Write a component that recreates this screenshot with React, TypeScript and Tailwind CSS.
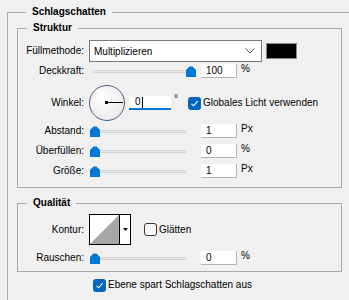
import React from 'react';

const font = { fontFamily: '"Liberation Sans", Arial, sans-serif' };

function Thumb() {
    return (
        <svg width="10" height="11" viewBox="0 0 10 11" className="block">
            <path d="M0 11 V4 L3.5 0.5 H6.5 L10 4 V11 Z" fill="#0078d7" />
        </svg>
    );
}

function Slider({ atEnd = false }: { atEnd?: boolean }) {
    return (
        <div className="relative h-[11px] w-[106px]">
            <div className="absolute left-[3px] right-[10px] top-[4px] h-[3px] border border-[#d6d6d6] bg-[#e7e7e7]" />
            <div className={`absolute top-0 ${atEnd ? 'left-[96px]' : 'left-0'}`}>
                <Thumb />
            </div>
        </div>
    );
}

function NumBox({ value }: { value: string }) {
    return (
        <div className="flex h-[14px] w-[36px] items-center border-b border-r border-[#b4b4b4] bg-white pl-[5px] text-[10px] leading-none text-black">
            {value}
        </div>
    );
}

function Check({ checked = true }: { checked?: boolean }) {
    if (!checked) {
        return <div className="h-[13px] w-[13px] rounded-[3px] border border-[#333] bg-[#fafafa]" />;
    }
    return (
        <div className="flex h-[13px] w-[13px] items-center justify-center rounded-[3px] bg-[#0067c0]">
            <svg width="9" height="9" viewBox="0 0 9 9">
                <path d="M1.5 4.8 L3.6 6.8 L7.6 2.2" fill="none" stroke="white" strokeWidth="1.1" />
            </svg>
        </div>
    );
}

function Label({ children }: { children: React.ReactNode }) {
    return <div className="w-[67px] shrink-0 pr-[1px] text-right text-[10px] leading-none text-black">{children}</div>;
}

function SliderRow({ label, value, unit, atEnd = false, className = '' }: { label: string; value: string; unit: string; atEnd?: boolean; className?: string }) {
    return (
        <div className={`flex h-[16px] items-center ${className}`}>
            <Label>{label}</Label>
            <div className="ml-[5px]">
                <Slider atEnd={atEnd} />
            </div>
            <div className="ml-[5px]">
                <NumBox value={value} />
            </div>
            <div className="ml-[4px] -mt-[5px] text-[10px] leading-none text-black">{unit}</div>
        </div>
    );
}

export default function App() {
    return (
        <div className="h-[300px] w-[349px] overflow-hidden bg-[#f0f0f0] text-black" style={font}>
            <fieldset className="ml-[7px] mt-[4px] w-[360px] border-l border-t border-[#a9a9a9] p-0 pl-[9px]">
                <legend className="ml-[9px] px-[6px] text-[10px] font-bold leading-[16px]">Schlagschatten</legend>

                <fieldset className="w-[325px] border border-[#a9a9a9] p-0">
                    <legend className="ml-[9px] px-[6px] text-[10px] font-bold leading-[16px]">Struktur</legend>
                    <div className="flex flex-col pb-[8px] pt-[4px]">
                        <div className="flex h-[22px] items-center">
                            <Label>Füllmethode:</Label>
                            <div className="ml-[4px] flex h-[22px] w-[173px] items-center justify-between border border-[#7a7a7a] bg-white pl-[4px] pr-[6px] text-[10px]">
                                <span>Multiplizieren</span>
                                <svg width="10" height="6" viewBox="0 0 10 6">
                                    <path d="M0.5 0.5 L5 5 L9.5 0.5" fill="none" stroke="#555" strokeWidth="1" />
                                </svg>
                            </div>
                            <div className="ml-[4px] h-[16px] w-[31px] border border-[#888] bg-black" />
                        </div>

                        <SliderRow label="Deckkraft:" value="100" unit="%" atEnd className="mt-[1px]" />

                        <div className="mt-[6px] flex h-[36px] items-center">
                            <Label>Winkel:</Label>
                            <div className="relative ml-[4px] h-[36px] w-[36px] rounded-full border-[1.5px] border-[#4e5a7a] bg-[radial-gradient(circle_at_40%_35%,#ffffff,#e4e4e4)]">
                                <div className="absolute left-[16px] top-[15.5px] h-[1px] w-[17px] bg-black" />
                                <div className="absolute left-[15px] top-[14.5px] h-[3px] w-[3px] bg-black" />
                            </div>
                            <div className="ml-[4px] flex h-[14px] w-[42px] items-center border-b-2 border-[#0078d7] bg-white pl-[6px] text-[10px] leading-none">
                                0<span className="ml-[1px] inline-block h-[11px] w-[1px] bg-black" />
                            </div>
                            <div className="ml-[3px] -mt-[9px] text-[10px] leading-none">°</div>
                            <div className="ml-[10px]">
                                <Check />
                            </div>
                            <div className="ml-[2px] text-[10px] leading-none">Globales Licht verwenden</div>
                        </div>

                        <SliderRow label="Abstand:" value="1" unit="Px" className="mt-[2px]" />
                        <SliderRow label="Überfüllen:" value="0" unit="%" className="mt-[4px]" />
                        <SliderRow label="Größe:" value="1" unit="Px" className="mt-[4px]" />
                    </div>
                </fieldset>

                <fieldset className="mt-[7px] w-[325px] border border-[#a9a9a9] p-0">
                    <legend className="ml-[9px] px-[6px] text-[10px] font-bold leading-[16px]">Qualität</legend>
                    <div className="flex flex-col pb-[5px] pt-[3px]">
                        <div className="flex h-[31px] items-center">
                            <Label>Kontur:</Label>
                            <div className="ml-[4px] flex h-[31px] w-[42px] border border-black bg-white">
                                <svg width="29" height="29" viewBox="0 0 29 29" className="block">
                                    <path d="M0 29 L29 0 V29 Z" fill="#a6a6a6" />
                                </svg>
                                <div className="flex w-[11px] items-center justify-center border-l border-black">
                                    <svg width="5" height="3" viewBox="0 0 5 3">
                                        <path d="M0 0 H5 L2.5 3 Z" fill="black" />
                                    </svg>
                                </div>
                            </div>
                            <div className="ml-[13px]">
                                <Check checked={false} />
                            </div>
                            <div className="ml-[2px] text-[10px] leading-none">Glätten</div>
                        </div>
                        <SliderRow label="Rauschen:" value="0" unit="%" className="mt-[5px]" />
                    </div>
                </fieldset>

                <div className="mt-[6px] flex h-[14px] items-center pl-[76px]">
                    <Check />
                    <div className="ml-[2px] text-[10px] leading-none">Ebene spart Schlagschatten aus</div>
                </div>
                <div className="h-[40px]" />
            </fieldset>
        </div>
    );
}
